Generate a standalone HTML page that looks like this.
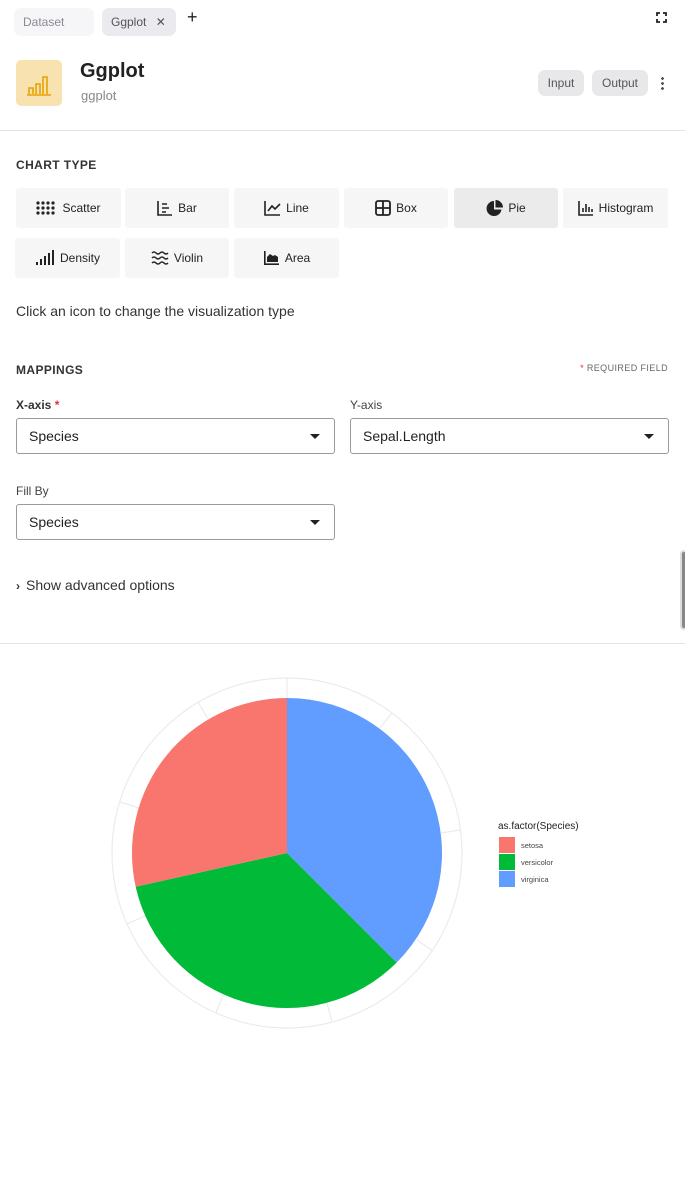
<!DOCTYPE html>
<html><head><meta charset="utf-8"><style>
*{box-sizing:border-box;margin:0;padding:0}
body{width:685px;height:1180px;background:#fff;font-family:"Liberation Sans",sans-serif;color:#222;position:relative;overflow:hidden}
.abs{position:absolute}
.tab{position:absolute;top:8px;height:28px;border-radius:7px;font-size:12px;color:#8a8a95;line-height:28px;padding-left:9px}
.btn{position:absolute;height:40px;background:#f6f6f6;border-radius:3px;font-size:12px;color:#222;display:flex;align-items:center;justify-content:center;gap:5px}
.sel{position:absolute;height:36px;border:1px solid #9a9a9a;border-radius:3px;font-size:14px;line-height:34px;padding-left:12px;color:#222}
.sel:after{content:"";position:absolute;right:14px;top:15px;border-left:5px solid transparent;border-right:5px solid transparent;border-top:5px solid #222}
.lbl{position:absolute;font-size:12px;color:#444}
.h{position:absolute;font-size:12px;font-weight:bold;letter-spacing:.4px;color:#333}
</style></head><body>
<div class="tab" style="left:14px;width:80px;background:#f6f6f8">Dataset</div>
<div class="tab" style="left:102px;width:74px;background:#ebebef;color:#555">Ggplot <span style="margin-left:6px;color:#555">✕</span></div>
<div class="abs" style="left:187px;top:7px;font-size:18px;color:#222">+</div>
<svg class="abs" style="left:656px;top:12px" width="11" height="11" viewBox="0 0 11 11" fill="none" stroke="#222" stroke-width="1.8"><path d="M1 4V1h3M7 1h3v3M10 7v3H7M4 10H1V7"/></svg>

<div class="abs" style="left:16px;top:60px;width:46px;height:46px;background:#f8e3b0;border-radius:5px"></div>
<svg class="abs" style="left:24px;top:68px" width="30" height="30" viewBox="0 0 30 30" fill="none" stroke="#e8a200" stroke-width="1.6"><path d="M3 27h24M5 26v-6h4v6M12 26v-10h4v10M19 26V9h4v17"/></svg>
<div class="abs" style="left:80px;top:60px;font-size:20px;font-weight:bold;color:#222">Ggplot</div>
<div class="abs" style="left:81px;top:88px;font-size:13px;color:#888">ggplot</div>
<div class="abs" style="left:538px;top:70px;width:46px;height:26px;background:#e8e8ea;border-radius:7px;font-size:12px;color:#555;text-align:center;line-height:26px">Input</div>
<div class="abs" style="left:592px;top:70px;width:56px;height:26px;background:#e8e8ea;border-radius:7px;font-size:12px;color:#555;text-align:center;line-height:26px">Output</div>
<div class="abs" style="left:661px;top:76px;width:3px;height:15px;background:radial-gradient(circle,#555 1.3px,transparent 1.5px) 0 0/3px 5px"></div>
<div class="abs" style="left:0;top:130px;width:685px;height:1px;background:#e3e3e3"></div>

<div class="h" style="left:16px;top:158px">CHART TYPE</div>
<div class="btn" style="left:16px;top:188px;width:105px">
<svg width="21" height="14" viewBox="0 0 21 14" fill="#222"><g><circle cx="2" cy="2" r="1.6"/><circle cx="7" cy="2" r="1.6"/><circle cx="12" cy="2" r="1.6"/><circle cx="17" cy="2" r="1.6"/><circle cx="2" cy="7" r="1.6"/><circle cx="7" cy="7" r="1.6"/><circle cx="12" cy="7" r="1.6"/><circle cx="17" cy="7" r="1.6"/><circle cx="2" cy="12" r="1.6"/><circle cx="7" cy="12" r="1.6"/><circle cx="12" cy="12" r="1.6"/><circle cx="17" cy="12" r="1.6"/></g></svg>Scatter</div>
<div class="btn" style="left:125px;top:188px;width:104px"><svg width="16" height="16" viewBox="0 0 16 16" fill="none" stroke="#222" stroke-width="1.6"><path d="M1 1v14h14M5 4h5M5 8h7M5 12h4"/></svg>Bar</div>
<div class="btn" style="left:234px;top:188px;width:105px"><svg width="17" height="16" viewBox="0 0 17 16" fill="none" stroke="#222" stroke-width="1.6"><path d="M1 1v14h15M4 11l4-5 3 3 5-5"/></svg>Line</div>
<div class="btn" style="left:344px;top:188px;width:104px"><svg width="16" height="16" viewBox="0 0 16 16" fill="none" stroke="#222" stroke-width="1.8"><rect x="1" y="1" width="14" height="14" rx="2"/><path d="M8 1v14M1 8h14"/></svg>Box</div>
<div class="btn" style="left:454px;top:188px;width:104px;background:#ebebeb"><svg width="17" height="17" viewBox="0 0 17 17" fill="#222"><path d="M8 1a7.5 7.5 0 1 0 7.5 8.5H8z"/><path d="M9.5 0v7.5H17A7.5 7.5 0 0 0 9.5 0z"/></svg>Pie</div>
<div class="btn" style="left:563px;top:188px;width:105px"><svg width="16" height="16" viewBox="0 0 16 16" fill="none" stroke="#222" stroke-width="1.6"><path d="M1 1v14h14M5 12V8M8 12V4M11 12V7M14 12V9"/></svg>Histogram</div>
<div class="btn" style="left:15px;top:238px;width:105px"><svg width="20" height="16" viewBox="0 0 20 16" fill="#222"><rect x="1" y="12" width="2" height="3"/><rect x="5" y="9" width="2" height="6"/><rect x="9" y="6" width="2" height="9"/><rect x="13" y="3" width="2" height="12"/><rect x="17" y="0" width="2" height="15"/></svg>Density</div>
<div class="btn" style="left:125px;top:238px;width:104px"><svg width="18" height="14" viewBox="0 0 18 14" fill="none" stroke="#222" stroke-width="1.5"><path d="M1 2q2-2 4 0t4 0 4 0 4 0M1 7q2-2 4 0t4 0 4 0 4 0M1 12q2-2 4 0t4 0 4 0 4 0"/></svg>Violin</div>
<div class="btn" style="left:234px;top:238px;width:105px"><svg width="17" height="16" viewBox="0 0 17 16" fill="#222"><path d="M1 1v14h15v-1.6H2.6V1z"/><path d="M4 12V7l3-3 3 2 2-1 3 2v5z"/></svg>Area</div>
<div class="abs" style="left:16px;top:303px;font-size:14px;color:#333">Click an icon to change the visualization type</div>

<div class="h" style="left:16px;top:363px">MAPPINGS</div>
<div class="abs" style="right:17px;top:363px;font-size:9px;color:#666;letter-spacing:.4px"><span style="color:#d33">*</span> REQUIRED FIELD</div>
<div class="lbl" style="left:16px;top:398px;font-weight:bold;color:#333">X-axis <span style="color:#d33">*</span></div>
<div class="lbl" style="left:350px;top:398px">Y-axis</div>
<div class="sel" style="left:16px;top:418px;width:319px">Species</div>
<div class="sel" style="left:350px;top:418px;width:319px">Sepal.Length</div>
<div class="lbl" style="left:16px;top:484px">Fill By</div>
<div class="sel" style="left:16px;top:504px;width:319px">Species</div>
<div class="abs" style="left:16px;top:577px;font-size:14px;color:#333"><b style="font-size:12px;margin-right:6px">›</b>Show advanced options</div>
<div class="abs" style="left:680px;top:550px;width:8px;height:80px;border-radius:4px;background:#888;border:2px solid #ddd"></div>
<div class="abs" style="left:0;top:643px;width:685px;height:1px;background:#e3e3e3"></div>

<svg class="abs" style="left:0;top:660px" width="685" height="400" viewBox="0 660 685 400">
<circle cx="287" cy="853" r="175" fill="none" stroke="#ebebeb" stroke-width="1.2"/>
<g stroke="#ebebeb" stroke-width="1.2">
<path d="M287 678V698"/>
<path d="M198 702L208 719"/>
<path d="M120 802L139 808"/>
<path d="M127 924L145 916"/>
<path d="M216 1013L223 995"/>
<path d="M332 1022L327 1003"/>
<path d="M460 830L441 833"/>
<path d="M392 713L380 728"/>
<path d="M433 951L417 940"/>
</g>
<path d="M287 853L287 698A155 155 0 0 1 396.6 962.6Z" fill="#619cff"/>
<path d="M287 853L396.6 962.6A155 155 0 0 1 135.7 886.8Z" fill="#00ba38"/>
<path d="M287 853L135.7 886.8A155 155 0 0 1 287 698Z" fill="#f8766d"/>
<text x="498" y="829" font-size="10" fill="#222" font-family="Liberation Sans,sans-serif">as.factor(Species)</text>
<rect x="499" y="837" width="16" height="16" fill="#f8766d"/>
<rect x="499" y="854" width="16" height="16" fill="#00ba38"/>
<rect x="499" y="871" width="16" height="16" fill="#619cff"/>
<g font-size="7.5" fill="#444" font-family="Liberation Sans,sans-serif">
<text x="521" y="848">setosa</text><text x="521" y="865">versicolor</text><text x="521" y="882">virginica</text></g>
</svg>
</body></html>
